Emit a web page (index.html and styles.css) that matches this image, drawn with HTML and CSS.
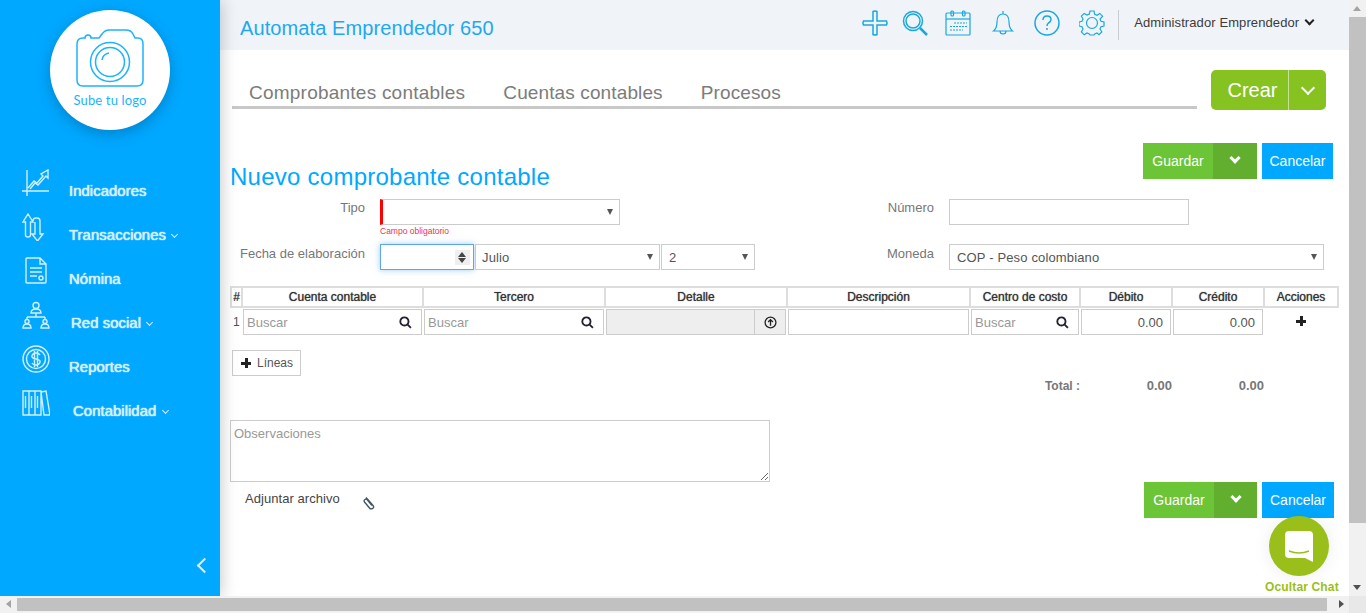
FILE: index.html
```html
<!DOCTYPE html>
<html>
<head>
  <title>Nuevo comprobante contable</title>
  <link rel="stylesheet" href="styles.css">
</head>
<body>
<div class="app">
  <div class="window">
    <aside class="sidebar">
      <div class="logo">
        <svg class="logo-cam" viewBox="0 0 66 57">
          <path d="M6 8h2q0-3 3-3t3 3h8l3-4q3-4 7-4h17q5 0 7 4l2 4h3q5 0 5 6v36q0 6-6 6H6q-6 0-6-6V14q0-6 6-6z"/>
          <circle cx="33" cy="32" r="19.5"/>
          <circle cx="33" cy="32" r="14.5"/>
          <path d="M25 30q1-6 7-7"/>
        </svg>
        <span class="logo-text">Sube tu logo</span>
      </div>
      <nav class="nav">
        <a class="nav-item">
          <svg class="nav-icon" viewBox="0 0 28 28"><path d="M5 1v26M0 22h27M6 19l6-7 3 2 6-7-2-2 7-4v8l-2-2-8 9-3-2-5 6"/></svg>
          <span class="nav-label">Indicadores</span>
        </a>
        <a class="nav-item">
          <svg class="nav-icon" viewBox="0 0 28 28"><path d="M6 1l5 8H8.500v13q0 2-2.500 2t-2.500-2V9H1zM11 8q0-3 3-3h1q3 0 3 3v13h3l-5.500 7L10 21h3V9"/></svg>
          <span class="nav-label">Transacciones <i class="caret"></i></span>
        </a>
        <a class="nav-item">
          <svg class="nav-icon" viewBox="0 0 28 28"><path d="M5 1h13l6 6v18q0 1-1 1H5q-1 0-1-1V2q0-1 1-1zM18 1v6h6M8 11h12M8 15h12M8 19h7"/><circle cx="19" cy="21" r="2"/></svg>
          <span class="nav-label">Nómina</span>
        </a>
        <a class="nav-item item-red">
          <svg class="nav-icon" viewBox="0 0 28 28"><circle cx="14" cy="4.500" r="3"/><path d="M9 12q0-4 5-4t5 4zM14 12v4M5 16h18M5 16v3M23 16v3"/><circle cx="5" cy="20.500" r="2"/><circle cx="23" cy="20.500" r="2"/><path d="M1 27q0-4 4-4t4 4zM19 27q0-4 4-4t4 4z"/></svg>
          <span class="nav-label">Red social <i class="caret"></i></span>
        </a>
        <a class="nav-item">
          <svg class="nav-icon" viewBox="0 0 28 28"><circle cx="14" cy="14" r="13"/><circle cx="14" cy="14" r="9.500"/><path d="M18 10q-1-2-4-2t-4 2.500 4 3.500 4 3.500-4 2.500-4-2M12.500 6v16M15.500 6v16"/></svg>
          <span class="nav-label">Reportes</span>
        </a>
        <a class="nav-item item-cont">
          <svg class="nav-icon" viewBox="0 0 28 28"><path d="M1 2h6v24H1zM7 2h6v24H7zM13 2h6v24h-6zM19 3l5-1 4 24h-6zM3.500 7v12M9.500 7v12M15.500 7v12"/></svg>
          <span class="nav-label">Contabilidad <i class="caret"></i></span>
        </a>
      </nav>
      <div class="collapse"><i class="collapse-arrow"></i></div>
    </aside>

    <div class="page">
      <header class="topbar">
        <span class="company">Automata Emprendedor 650</span>
        <div class="tools">
          <svg class="tool tool-plus" viewBox="0 0 26 26"><path d="M11 1.500q2-1 4 0V11h9.500q1 2 0 4H15v9.500q-2 1-4 0V15H1.500q-1-2 0-4H11z"/></svg>
          <svg class="tool tool-search" viewBox="0 0 26 26"><circle cx="11" cy="11" r="9.500"/><circle cx="11" cy="11" r="7"/><path d="M18 18l7 7" stroke-width="2.500"/></svg>
          <svg class="tool tool-cal" viewBox="0 0 26 26"><rect x="1" y="3" width="24" height="22" rx="1"/><path d="M1 9h24"/><rect x="6" y="1" width="2.500" height="5" rx="1"/><rect x="17.500" y="1" width="2.500" height="5" rx="1"/><path class="cal-dots" d="M9 13h13M5 16.500h17M5 20h13"/></svg>
          <svg class="tool tool-bell" viewBox="0 0 26 26"><path d="M13 1v3M13 4q-6 0-6 8 0 6-3.500 9h19Q19 18 19 12q0-8-6-8zM10 21q0 3 3 3t3-3"/></svg>
          <svg class="tool tool-help" viewBox="0 0 26 26"><circle cx="13" cy="13" r="12"/><path d="M9 10q0-4 4-4t4 3.500q0 2-2.500 3.500-1.500 1-1.500 3M13 18v2"/></svg>
          <svg class="tool tool-gear" viewBox="0 0 26 26"><path d="M11 1h4l.7 3.200 2.300 1 2.800-1.800 2.800 2.800L21 9l1 2.300 3 .7v4l-3 .7-1 2.300 1.800 2.800-2.800 2.800L18 23l-2.300 1L15 25h-4l-.7-1L8 23l-2.800 1.800-2.800-2.800L4 19l-1-2.300-3-.7v-4l3-.7L4 9 2.400 6.200l2.800-2.800L8 5l2.300-1z"/><circle cx="13" cy="13" r="5.500"/></svg>
        </div>
        <div class="user">Administrador Emprendedor <i class="user-caret"></i></div>
      </header>

      <main class="content">
        <div class="tabs-row">
          <div class="tabs">
            <a class="tab">Comprobantes contables</a>
            <a class="tab">Cuentas contables</a>
            <a class="tab">Procesos</a>
          </div>
          <div class="btn-crear">
            <span class="crear-text">Crear</span>
            <span class="crear-arrow"><i class="chev-thin"></i></span>
          </div>
        </div>

        <div class="head">
          <h1 class="title">Nuevo comprobante contable</h1>
          <div class="actions">
            <div class="btn-save"><span class="save-text">Guardar</span><span class="save-arrow"><i class="chev"></i></span></div>
            <div class="btn-cancel">Cancelar</div>
          </div>
        </div>

        <div class="form-row row-tipo">
          <label class="lbl">Tipo</label>
          <div class="field-wide">
            <div class="sel sel-required"><select class="ctl"><option></option></select></div>
            <div class="error">Campo obligatorio</div>
          </div>
          <label class="lbl lbl-right">Número</label>
          <input class="ctl num" type="text">
        </div>

        <div class="form-row row-fecha">
          <label class="lbl">Fecha de elaboración</label>
          <div class="date">
            <div class="year"><input class="year-input" type="text"><span class="spin"></span></div>
            <div class="sel month"><select class="ctl"><option>Julio</option></select></div>
            <div class="sel day"><select class="ctl"><option>2</option></select></div>
          </div>
          <label class="lbl lbl-right">Moneda</label>
          <div class="sel currency"><select class="ctl"><option>COP - Peso colombiano</option></select></div>
        </div>

        <table class="lines">
          <colgroup>
            <col class="c-n"><col class="c-a"><col class="c-b"><col class="c-b"><col class="c-d"><col class="c-e"><col class="c-f"><col class="c-f"><col class="c-g">
          </colgroup>
          <thead>
            <tr>
              <th>#</th><th>Cuenta contable</th><th>Tercero</th><th>Detalle</th><th>Descripción</th><th>Centro de costo</th><th>Débito</th><th>Crédito</th><th>Acciones</th>
            </tr>
          </thead>
          <tbody>
            <tr>
              <td class="n">1</td>
              <td><div class="cell-search"><input class="cell-input" placeholder="Buscar"><svg class="mag" viewBox="0 0 12 12"><circle cx="5" cy="5" r="3.800"/><path d="M8 8l3 3"/></svg></div></td>
              <td><div class="cell-search"><input class="cell-input" placeholder="Buscar"><svg class="mag" viewBox="0 0 12 12"><circle cx="5" cy="5" r="3.800"/><path d="M8 8l3 3"/></svg></div></td>
              <td>
                <div class="detail">
                  <span class="detail-box"></span>
                  <span class="detail-btn"><svg class="up" viewBox="0 0 12 12"><circle cx="6" cy="6" r="5"/><path d="M6 9V3.500M3.800 5.500L6 3.300l2.200 2.200"/></svg></span>
                </div>
              </td>
              <td><input class="cell-input cell-plain"></td>
              <td><div class="cell-search"><input class="cell-input" placeholder="Buscar"><svg class="mag" viewBox="0 0 12 12"><circle cx="5" cy="5" r="3.800"/><path d="M8 8l3 3"/></svg></div></td>
              <td><input class="cell-input cell-plain cell-num" value="0.00"></td>
              <td><input class="cell-input cell-plain cell-num" value="0.00"></td>
              <td class="act"><i class="plus"></i></td>
            </tr>
          </tbody>
        </table>

        <div class="btn-lines"><i class="plus"></i>Líneas</div>

        <div class="totals">
          <span class="tot-label">Total :</span>
          <span class="tot-val">0.00</span>
          <span class="tot-val">0.00</span>
        </div>

        <textarea class="notes" placeholder="Observaciones"></textarea>

        <div class="foot">
          <div class="attach">
            <span>Adjuntar archivo</span>
            <svg class="clip" viewBox="0 0 12 14"><path d="M3 1.500l7 8q1.500 2-.5 3t-3-.5L1.500 6q-1-1.500.5-2.500t2.500.5l4.500 5.500"/></svg>
          </div>
          <div class="actions">
            <div class="btn-save"><span class="save-text">Guardar</span><span class="save-arrow"><i class="chev"></i></span></div>
            <div class="btn-cancel">Cancelar</div>
          </div>
        </div>
      </main>
    </div>

    <div class="vbar">
      <span class="arrow arrow-up"></span>
      <span class="vthumb"></span>
      <span class="arrow arrow-down"></span>
    </div>
  </div>

  <div class="hbar">
    <span class="arrow arrow-left"></span>
    <span class="hthumb"></span>
    <span class="arrow arrow-right"></span>
    <span class="corner"></span>
  </div>

  <div class="chat">
    <div class="chat-circle">
      <svg class="chat-icon" viewBox="0 0 28 32"><path d="M4 0h20q4 0 4 4v27l-8-4H4q-4 0-4-4V4q0-4 4-4z" fill="#fff"/><path d="M4 20q10 4 20 0" fill="none" stroke="#9abf1a" stroke-width="1.500"/></svg>
    </div>
    <span class="chat-text">Ocultar Chat</span>
  </div>
</div>
</body>
</html>
```

FILE: styles.css
```css
* { box-sizing: border-box; }
html, body { margin: 0; height: 100%; overflow: hidden; }
body {
  font-family: "Liberation Sans", Arial, sans-serif;
  font-size: 13px;
  color: #555;
  background: #fff;
}
.app { position: relative; width: 1366px; height: 613px; display: flex; flex-direction: column; }
.window { display: flex; height: 596px; }

/* sidebar */
.sidebar {
  width: 220px;
  flex: none;
  background: #00a8ff;
  box-shadow: 0 0 16px rgba(0,0,0,0.25);
  display: flex;
  flex-direction: column;
  position: relative;
  z-index: 2;
}
.logo {
  width: 120px; height: 120px;
  margin: 10px 0 0 50px;
  border-radius: 50%;
  background: #fff;
  box-shadow: 0 4px 14px rgba(0,60,110,0.35);
  display: flex;
  flex-direction: column;
  align-items: center;
  padding-top: 20px;
}
.logo-cam { width: 66px; height: 57px; fill: none; stroke: #1cb2ff; stroke-width: 1.500; overflow: visible; }
.logo-text { margin-top: 5px; font-family: "Lato", sans-serif; font-size: 13px; color: #1cb2ff; letter-spacing: 0.15px; }
.nav { margin-top: 33px; }
.nav-item { display: flex; height: 44px; padding-left: 22px; align-items: center; color: #d3efff; }
.nav-icon { width: 28px; height: 28px; flex: none; fill: none; stroke: #d3efff; stroke-width: 1.400; margin-top: -4px; }
.nav-label {
  margin-left: 19px; margin-top: 10px;
  font-size: 15px;
  text-shadow: 0 0 1px #d3efff, 0 0 1px #d3efff;
  white-space: nowrap;
}
.item-red .nav-label { margin-left: 21px; }
.item-cont .nav-label { margin-left: 23px; }
.caret {
  display: inline-block;
  width: 5px; height: 5px;
  margin: 0 0 3px 2px;
  border-right: 1.500px solid #d3efff;
  border-bottom: 1.500px solid #d3efff;
  transform: rotate(45deg);
}
.collapse { margin-top: auto; padding: 0 0 25px 199px; }
.collapse-arrow {
  display: block;
  width: 11px; height: 11px;
  border-left: 2px solid #d3efff;
  border-bottom: 2px solid #d3efff;
  transform: rotate(45deg);
}

/* top bar */
.page { flex: 1; min-width: 0; display: flex; flex-direction: column; }
.topbar {
  height: 50px;
  background: #f0f3f8;
  display: flex;
  align-items: flex-start;
  padding-left: 20px;
}
.company { font-size: 20px; color: #1ea9f0; margin-top: 17px; letter-spacing: 0.1px; }
.tools { margin-left: auto; display: flex; align-items: center; height: 46px; }
.tool { width: 26px; height: 26px; fill: none; stroke: #18a9dc; stroke-width: 1.500; margin-left: 18px; }
.tool-search { stroke-width: 1.500; margin-left: 14px; }
.tool-cal { margin-left: 17px; stroke-width: 1.200; }
.cal-dots { stroke-dasharray: 2 1; }
.tool-bell { margin-left: 19px; stroke-width: 1.200; }
.tool-gear { stroke-width: 1.200; margin-left: 19px; }
.user {
  height: 30px;
  margin: 10px 0 0 13px;
  padding: 5px 36px 0 15px;
  border-left: 1px solid #c9ccd0;
  font-size: 13px;
  color: #3c3c3c;
  white-space: nowrap;
  letter-spacing: 0.1px;
}
.user-caret {
  display: inline-block;
  width: 7px; height: 7px;
  margin: 0 0 3px 3px;
  border-right: 2px solid #222;
  border-bottom: 2px solid #222;
  transform: rotate(45deg);
}

/* tabs */
.content { padding: 20px 0 0 10px; flex: 1; }
.tabs-row { display: flex; height: 40px; }
.tabs {
  width: 965px;
  height: 39px;
  margin-left: 2px;
  border-bottom: 3px solid #c8c8c8;
  display: flex;
  padding: 12px 0 0 17px;
  gap: 38px;
}
.tab { font-size: 19px; color: #7c7c7c; letter-spacing: 0.12px; }
.tab:first-child { letter-spacing: 0.23px; }
.btn-crear {
  width: 115px;
  margin-left: 14px;
  background: #86c320;
  border-radius: 5px;
  color: #fff;
  display: flex;
  font-size: 20px;
}
.crear-text { width: 77px; padding-left: 6px; text-align: center; line-height: 40px; }
.crear-arrow { flex: 1; border-left: 1px solid #c4e194; display: flex; align-items: center; justify-content: center; }
.chev-thin {
  width: 10px; height: 10px;
  margin-top: -5px;
  border-right: 2px solid #fff;
  border-bottom: 2px solid #fff;
  transform: rotate(45deg);
}

/* heading and buttons */
.head { display: flex; height: 48px; margin-top: 33px; padding-right: 16px; justify-content: space-between; }
.title { margin: 0; align-self: flex-end; font-size: 24px; font-weight: normal; line-height: 28px; color: #00a8ff; letter-spacing: 0.25px; }
.actions { display: flex; gap: 5px; height: 36px; color: #fff; font-size: 14px; }
.btn-save { width: 114px; display: flex; background: #6cc437; line-height: 36px; }
.save-text { width: 70px; text-align: center; }
.save-arrow { flex: 1; background: #62ae2e; display: flex; justify-content: center; padding-top: 11px; }
.chev {
  width: 8px; height: 8px;
  border-right: 3px solid #fff;
  border-bottom: 3px solid #fff;
  transform: rotate(45deg);
}
.btn-cancel { width: 71px; background: #00a8ff; text-align: center; line-height: 36px; }
.foot .btn-save { width: 113px; }
.foot .btn-cancel { width: 72px; }

/* form */
.form-row { display: flex; height: 26px; }
.row-tipo { margin-top: 8px; }
.row-fecha { margin-top: 19px; }
.lbl { width: 135px; flex: none; text-align: right; padding-top: 1px; color: #777; }
.lbl-right { width: 150px; margin-left: 164px; text-align: right; }
.row-fecha .lbl-right { margin-left: 29px; }
.row-fecha .lbl { padding-top: 2px; }
.field-wide { width: 240px; margin-left: 15px; }
.ctl {
  width: 100%; height: 26px;
  padding: 0 7px;
  border: 1px solid #ccc;
  background: #fff;
  font: 13px "Liberation Sans", Arial, sans-serif;
  letter-spacing: 0.15px;
  color: #555;
  appearance: none;
  border-radius: 0;
}
.sel { position: relative; }
.sel::after {
  content: "";
  position: absolute;
  right: 7px; top: 10px;
  border-left: 3.500px solid transparent;
  border-right: 3.500px solid transparent;
  border-top: 6px solid #555;
}
.sel-required .ctl { border-left: 3px solid #f00; }
.error { font-size: 8.500px; color: #f0324f; margin-top: 1px; }
.num { width: 240px; margin-left: 15px; }
.date { display: flex; margin-left: 15px; gap: 1px; }
.year {
  width: 94px; height: 26px;
  border: 1px solid #5ca8e0;
  box-shadow: 0 0 6px rgba(90,170,240,0.6);
  display: flex;
  align-items: center;
  justify-content: flex-end;
  padding-right: 3px;
  position: relative;
}
.year-input { position: absolute; left: 0; top: 0; width: 70px; height: 24px; border: 0; outline: 0; background: transparent; }
.spin { width: 15px; height: 15px; background: #efefef; position: relative; }
.spin::before, .spin::after {
  content: "";
  position: absolute;
  left: 3px;
  border-left: 4px solid transparent;
  border-right: 4px solid transparent;
}
.spin::before { top: 2px; border-bottom: 5px solid #444; }
.spin::after { bottom: 2px; border-top: 5px solid #444; }
.month { width: 185px; }
.month .ctl { padding-left: 6px; }
.day { width: 94px; }
.currency { width: 375px; margin-left: 15px; }

/* lines table */
.lines {
  width: 1107px;
  margin: 16px 0 0 0;
  table-layout: fixed;
  border-collapse: collapse;
}
.c-n { width: 11px; }
.c-a { width: 181px; }
.c-b { width: 182px; }
.c-d { width: 183px; }
.c-e { width: 110px; }
.c-f { width: 92px; }
.c-g { width: 74px; }
.lines th {
  height: 20px;
  padding: 0;
  border: 2px solid #ddd;
  font-size: 12px;
  font-weight: normal;
  color: #333;
  text-shadow: 0 0 1px #555;
}
.lines td { padding: 1px 1px 0; height: 27px; vertical-align: top; }
.lines .n { padding: 7px 0 0 2px; font-size: 12px; color: #456; }
.cell-search { position: relative; }
.cell-input {
  width: 100%; height: 26px;
  padding: 0 3px;
  border: 1px solid #ccc;
  font: 13px "Liberation Sans", Arial, sans-serif;
  color: #555;
  display: block;
}
.cell-input::placeholder, .notes::placeholder { color: #999; opacity: 1; }
.cell-num { text-align: right; padding-right: 7px; font-size: 13px; }
.mag {
  position: absolute;
  right: 10px; top: 7px;
  width: 13px; height: 13px;
  fill: none;
  stroke: #223;
  stroke-width: 1.700;
}
.detail { display: flex; height: 26px; }
.detail-box { flex: 1; background: #eee; border: 1px solid #ccc; border-right: 0; }
.detail-btn { width: 32px; background: #eee; border: 1px solid #ccc; display: flex; align-items: center; justify-content: center; }
.up { width: 13px; height: 13px; fill: none; stroke: #222; stroke-width: 1.200; }
.act { text-align: center; }
.plus {
  display: inline-block;
  width: 10px; height: 10px;
  background:
    linear-gradient(#222, #222) center / 10px 3px no-repeat,
    linear-gradient(#222, #222) center / 3px 10px no-repeat;
}
.act .plus { margin-top: 7px; }
.btn-lines {
  width: 69px; height: 26px;
  margin: 15px 0 0 2px;
  border: 1px solid #ccc;
  display: flex;
  align-items: center;
  padding-left: 8px;
  font-size: 12px;
}
.btn-lines .plus { margin-right: 6px; }
.totals { display: flex; height: 18px; padding-top: 1px; font-weight: bold; color: #777; font-size: 12px; line-height: 18px; }
.tot-label { width: 850px; text-align: right; }
.tot-val { width: 92px; text-align: right; font-size: 13px; }
.notes {
  display: block;
  width: 540px; height: 62px;
  margin-top: 26px;
  padding: 5px 3px;
  border: 1px solid #ccc;
  font: 13px "Liberation Sans", Arial, sans-serif;
}
.foot { display: flex; justify-content: space-between; padding-right: 15px; }
.attach { display: flex; padding: 9px 0 0 15px; color: #444; letter-spacing: 0.05px; }
.clip { width: 12px; height: 14px; margin: 5px 0 0 23px; fill: none; stroke: #456; stroke-width: 1.400; }

/* fake browser scrollbars */
.vbar { width: 17px; flex: none; background: #f1f1f1; display: flex; flex-direction: column; position: relative; }
.vthumb { display: block; height: 506px; margin-top: 17px; background: #c1c1c1; }
.hbar { height: 17px; background: #f1f1f1; display: flex; position: relative; z-index: 3; }
.hthumb { display: block; width: 1310px; margin: 2px 0 0 17px; height: 13px; background: #c1c1c1; }
.corner { margin-left: auto; width: 17px; background: #e8e8e8; }
.arrow { position: absolute; width: 0; height: 0; }
.arrow-up { top: 6px; left: 4px; border: 4px solid transparent; border-top: 0; border-bottom: 5px solid #a3a3a3; }
.arrow-down { bottom: 6px; left: 4px; border: 4px solid transparent; border-bottom: 0; border-top: 5px solid #505050; }
.arrow-left { left: 6px; top: 4px; border: 4px solid transparent; border-left: 0; border-right: 5px solid #a3a3a3; }
.arrow-right { left: 1339px; top: 4px; border: 4px solid transparent; border-right: 0; border-left: 5px solid #505050; }

/* chat */
.chat {
  position: absolute;
  left: 1265px; top: 516px;
  width: 74px;
  display: flex;
  flex-direction: column;
  z-index: 4;
}
.chat-circle {
  width: 60px; height: 60px;
  margin-left: 4px;
  border-radius: 50%;
  background: #9abf1a;
  box-shadow: 0 0 18px rgba(0,0,0,0.08);
  display: flex;
  align-items: center;
  justify-content: center;
}
.chat-icon { width: 28px; height: 32px; margin-top: 2px; }
.chat-text { margin-top: 4px; font-size: 12px; font-weight: bold; color: #9abf1a; white-space: nowrap; letter-spacing: 0.15px; }
```
